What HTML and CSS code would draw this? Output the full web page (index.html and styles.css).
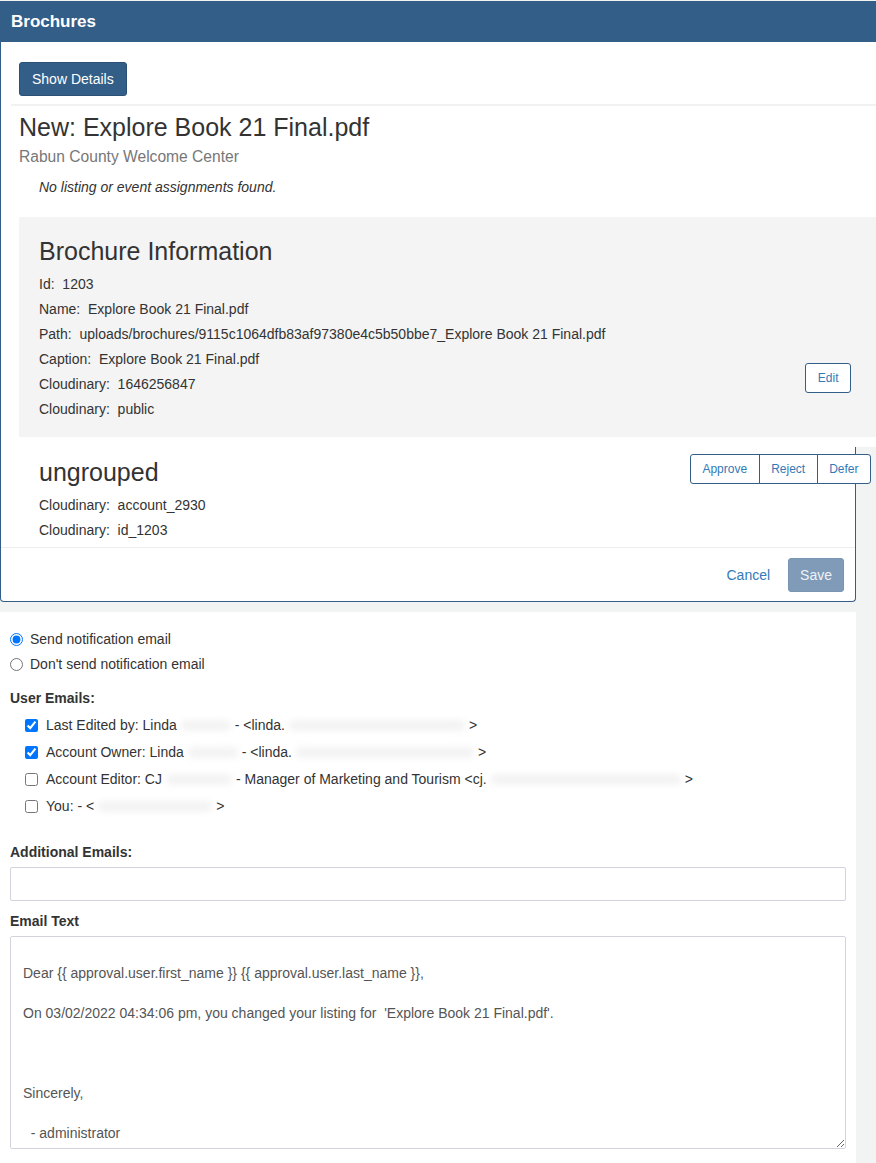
FILE: index.html
```html
<!DOCTYPE html>
<html lang="en">
<head>
<meta charset="utf-8">
<title>Brochures</title>
<link rel="stylesheet" href="styles.css">
</head>
<body>
<div class="panel">
  <div class="panel-wide">
    <div class="panel-heading">Brochures</div>
    <div class="panel-tools">
      <button class="btn btn-primary" type="button">Show Details</button>
    </div>
    <div class="rule"></div>
    <div class="record">
      <h2 class="record-title">New: Explore Book 21 Final.pdf</h2>
      <div class="record-sub">Rabun County Welcome Center</div>
      <p class="record-note">No listing or event assignments found.</p>
      <div class="info-box">
        <div class="info-main">
          <h3 class="section-title">Brochure Information</h3>
          <div class="field">Id:&nbsp; 1203</div>
          <div class="field">Name:&nbsp; Explore Book 21 Final.pdf</div>
          <div class="field">Path:&nbsp; uploads/brochures/9115c1064dfb83af97380e4c5b50bbe7_Explore Book 21 Final.pdf</div>
          <div class="field">Caption:&nbsp; Explore Book 21 Final.pdf</div>
          <div class="field">Cloudinary:&nbsp; 1646256847</div>
          <div class="field">Cloudinary:&nbsp; public</div>
        </div>
        <button class="btn btn-outline btn-edit" type="button">Edit</button>
      </div>
    </div>
  </div>
  <div class="group">
    <div class="group-main">
      <h3 class="section-title group-title">ungrouped</h3>
      <div class="field">Cloudinary:&nbsp; account_2930</div>
      <div class="field">Cloudinary:&nbsp; id_1203</div>
    </div>
    <div class="btn-group">
      <button class="btn btn-outline btn-sm" type="button">Approve</button>
      <button class="btn btn-outline btn-sm" type="button">Reject</button>
      <button class="btn btn-outline btn-sm" type="button">Defer</button>
    </div>
  </div>
  <div class="panel-footer">
    <a class="btn btn-link" href="#">Cancel</a>
    <button class="btn btn-save" type="button" disabled>Save</button>
  </div>
</div>

<form class="notify">
  <label class="radio-row"><input type="radio" name="notify" checked> Send notification email</label>
  <label class="radio-row"><input type="radio" name="notify"> Don't send notification email</label>

  <div class="form-label label-users">User Emails:</div>
  <label class="check-row"><input type="checkbox" checked> Last Edited by: Linda<span class="blur w58"></span>- &lt;linda.<span class="blur w180"></span>&gt;</label>
  <label class="check-row"><input type="checkbox" checked> Account Owner: Linda<span class="blur w58"></span>- &lt;linda.<span class="blur w184"></span>&gt;</label>
  <label class="check-row"><input type="checkbox"> Account Editor: CJ<span class="blur w74"></span>- Manager of Marketing and Tourism &lt;cj.<span class="blur w196"></span>&gt;</label>
  <label class="check-row"><input type="checkbox"> You: - &lt;<span class="blur w120"></span>&gt;</label>

  <div class="form-label label-additional">Additional Emails:</div>
  <input class="text-input" type="text">

  <div class="form-label label-text">Email Text</div>
  <textarea class="text-area">

Dear {{ approval.user.first_name }} {{ approval.user.last_name }},

On 03/02/2022 04:34:06 pm, you changed your listing for  'Explore Book 21 Final.pdf'.



Sincerely,

  - administrator</textarea>
</form>
</body>
</html>
```
FILE: styles.css
```css
* { box-sizing: border-box; }

html, body { overflow: hidden; }

body {
  margin: 0;
  padding-top: 1px;
  background: #f2f3f3;
  font-family: "Liberation Sans", Arial, sans-serif;
  font-size: 14px;
  line-height: 20px;
  color: #333;
}

/* ---------- panel ---------- */
.panel {
  width: 856px;
  background: #fff;
  border: 1px solid #335e88;
  border-top: 0;
  border-radius: 0 0 4px 4px;
}

.panel-wide {
  width: 875px;
  background: #fff;
  padding-bottom: 10px;
}

.panel-heading {
  height: 41px;
  line-height: 41px;
  padding: 0 10px;
  background: #335e88;
  color: #fff;
  font-size: 17px;
  font-weight: bold;
}

.panel-tools { padding: 20px 0 0 18px; }

.btn {
  display: inline-block;
  font-family: inherit;
  font-size: 14px;
  line-height: 20px;
  padding: 6px 12px;
  border: 1px solid transparent;
  border-radius: 3px;
  background: none;
  text-decoration: none;
  cursor: pointer;
}

.btn-primary {
  background: #335e88;
  border-color: #2b5075;
  color: #fff;
}

.rule {
  height: 2px;
  background: #f1f1f1;
  margin: 8px 0 0 10px;
}

.record { padding-left: 18px; }

.record-title {
  margin: 8px 0 0;
  font-size: 25px;
  line-height: 27px;
  font-weight: normal;
  color: #333;
}

.record-sub {
  margin-top: 6px;
  font-size: 15.6px;
  color: #777;
}

.record-note {
  margin: 10px 0 0 20px;
  font-style: italic;
  color: #333;
}

.info-box {
  display: flex;
  align-items: flex-start;
  margin-top: 20px;
  padding: 21px 25px 15px 20px;
  background: #f4f4f4;
}

.info-main { flex: 1; }

.section-title {
  margin: 0 0 7px;
  font-size: 25px;
  line-height: 27px;
  font-weight: normal;
  color: #333;
}

.field { line-height: 25px; }

.btn-outline {
  background: #fff;
  border-color: #335e88;
  color: #337ab7;
  font-size: 12px;
  line-height: 18px;
  padding: 5px 11.5px;
}

.btn-edit { margin-top: 125px; }

/* ---------- ungrouped ---------- */
.group {
  display: flex;
  align-items: flex-start;
  margin-left: 18px;
  padding: 7px 0 4px 20px;
}

.group-main { flex: 1; }

.group-title { margin: 5px 0 7px; }

.btn-group {
  display: flex;
  margin-right: -16px;
}

.btn-group .btn { border-radius: 0; }
.btn-group .btn + .btn { margin-left: -1px; }
.btn-group .btn:first-child { border-radius: 3px 0 0 3px; }
.btn-group .btn:last-child { border-radius: 0 3px 3px 0; }

.panel-footer {
  display: flex;
  justify-content: flex-end;
  align-items: center;
  gap: 5px;
  border-top: 1px solid #eee;
  padding: 10px 11px 9px;
}

.btn-link { color: #337ab7; }

.btn-save {
  padding: 6px 11px;
  background: #7f9bb7;
  border-color: #7895b2;
  color: #eef2f6;
}

/* ---------- notification form ---------- */
.notify {
  width: 856px;
  margin-top: 10px;
  background: #fff;
  padding: 15px 10px 20px 10px;
  min-height: 600px;
}

.radio-row,
.check-row {
  display: flex;
  align-items: center;
  white-space: nowrap;
}

.radio-row { line-height: 25px; }
.radio-row input { margin: 0 7px 0 0; width: 13px; height: 13px; }

.check-row { line-height: 27px; padding-left: 15px; }
.check-row input { margin: 0 8px 0 0; width: 13px; height: 13px; }

.form-label { font-weight: bold; }
.label-users { margin: 11px 0 4px; }
.label-additional { margin: 22px 0 5px; }
.label-text { margin: 10px 0 5px; }

.blur {
  display: inline-block;
  height: 11px;
  margin: 0 4px;
  border-radius: 5px;
  background: #f3f3f3;
  filter: blur(3px);
}
.w58 { width: 50px; }
.w74 { width: 66px; }
.w120 { width: 114px; }
.w180 { width: 176px; }
.w184 { width: 178px; }
.w196 { width: 190px; }

.text-input,
.text-area {
  display: block;
  width: 836px;
  border: 1px solid #d3d3de;
  border-radius: 2px;
  font-family: inherit;
  font-size: 14px;
  line-height: 20px;
  color: #555;
  background: #fff;
  padding: 6px 12px;
}

.text-input { height: 34px; }

.text-area {
  height: 213px;
  resize: vertical;
}
```
